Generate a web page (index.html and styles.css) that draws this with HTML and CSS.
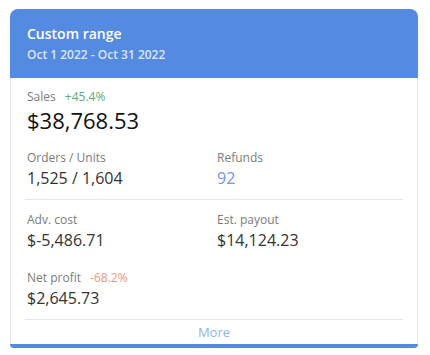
FILE: index.html
```html
<!DOCTYPE html>
<html lang="en">
<head>
  <meta charset="UTF-8" />
  <meta name="viewport" content="width=device-width, initial-scale=1.0" />
  <title>Custom range</title>
  <link rel="stylesheet" href="styles.css">
</head>
<body>
  <div class="card">
    <div class="card-head">
      <div class="title">Custom range</div>
      <div class="dates">Oct 1 2022 - Oct 31 2022</div>
    </div>
    <div class="card-body">
      <div class="section sales">
        <div class="label">Sales <span class="delta up">+45.4%</span></div>
        <div class="big">$38,768.53</div>
      </div>
      <div class="section grid">
        <div>
          <div class="label">Orders / Units</div>
          <div class="value">1,525 / 1,604</div>
        </div>
        <div>
          <div class="label">Refunds</div>
          <div class="value link">92</div>
        </div>
      </div>
      <div class="section grid last">
        <div>
          <div class="label">Adv. cost</div>
          <div class="value">$-5,486.71</div>
        </div>
        <div>
          <div class="label">Est. payout</div>
          <div class="value">$14,124.23</div>
        </div>
        <div class="wide">
          <div class="label">Net profit <span class="delta down">-68.2%</span></div>
          <div class="value">$2,645.73</div>
        </div>
      </div>
      <div class="more">More</div>
    </div>
  </div>
</body>
</html>
```
FILE: styles.css
```css
body {
  margin: 0;
  padding: 9px 12px 0 10px;
  background: #fff;
  font-family: 'Open Sans', sans-serif;
  color: #222;
}
.card {
  width: 408px;
  border-radius: 8px 8px 4px 4px;
  overflow: hidden;
  border-bottom: 4px solid #558ae1;
}
.card-head {
  background: #558ae1;
  height: 69px;
  box-sizing: border-box;
  padding: 15px 17px 0;
  color: #fff;
}
.title {
  font-size: 14px;
  font-weight: 600;
  line-height: 20px;
}
.dates {
  margin-top: 1px;
  font-size: 12px;
  font-weight: 600;
  line-height: 20px;
  color: rgba(255, 255, 255, 0.8);
}
.card-body {
  border-left: 1px solid #e6e6e6;
  border-right: 1px solid #e6e6e6;
  padding: 0 14px;
}
.section {
  padding: 10px 2px;
  border-bottom: 1px solid #e5e5e5;
}
.sales {
  border-bottom: none;
  padding-bottom: 5px;
}
.last {
  padding-top: 11px;
  padding-bottom: 10px;
}
.grid {
  display: grid;
  grid-template-columns: 190px 1fr;
  row-gap: 18px;
}
.wide {
  grid-column: 1 / 3;
}
.label {
  font-size: 12px;
  line-height: 18px;
  color: #7b7b7b;
}
.delta {
  font-size: 12px;
  margin-left: 6px;
}
.up {
  color: #5aae7b;
}
.down {
  color: #f4967c;
}
.big {
  font-size: 22px;
  line-height: 28px;
  color: #111;
}
.value {
  font-size: 16px;
  line-height: 22px;
  color: #333;
}
.link {
  color: #7295f0;
}
.more {
  text-align: center;
  font-size: 13px;
  line-height: 24px;
  color: #8fb3f3;
}
```
